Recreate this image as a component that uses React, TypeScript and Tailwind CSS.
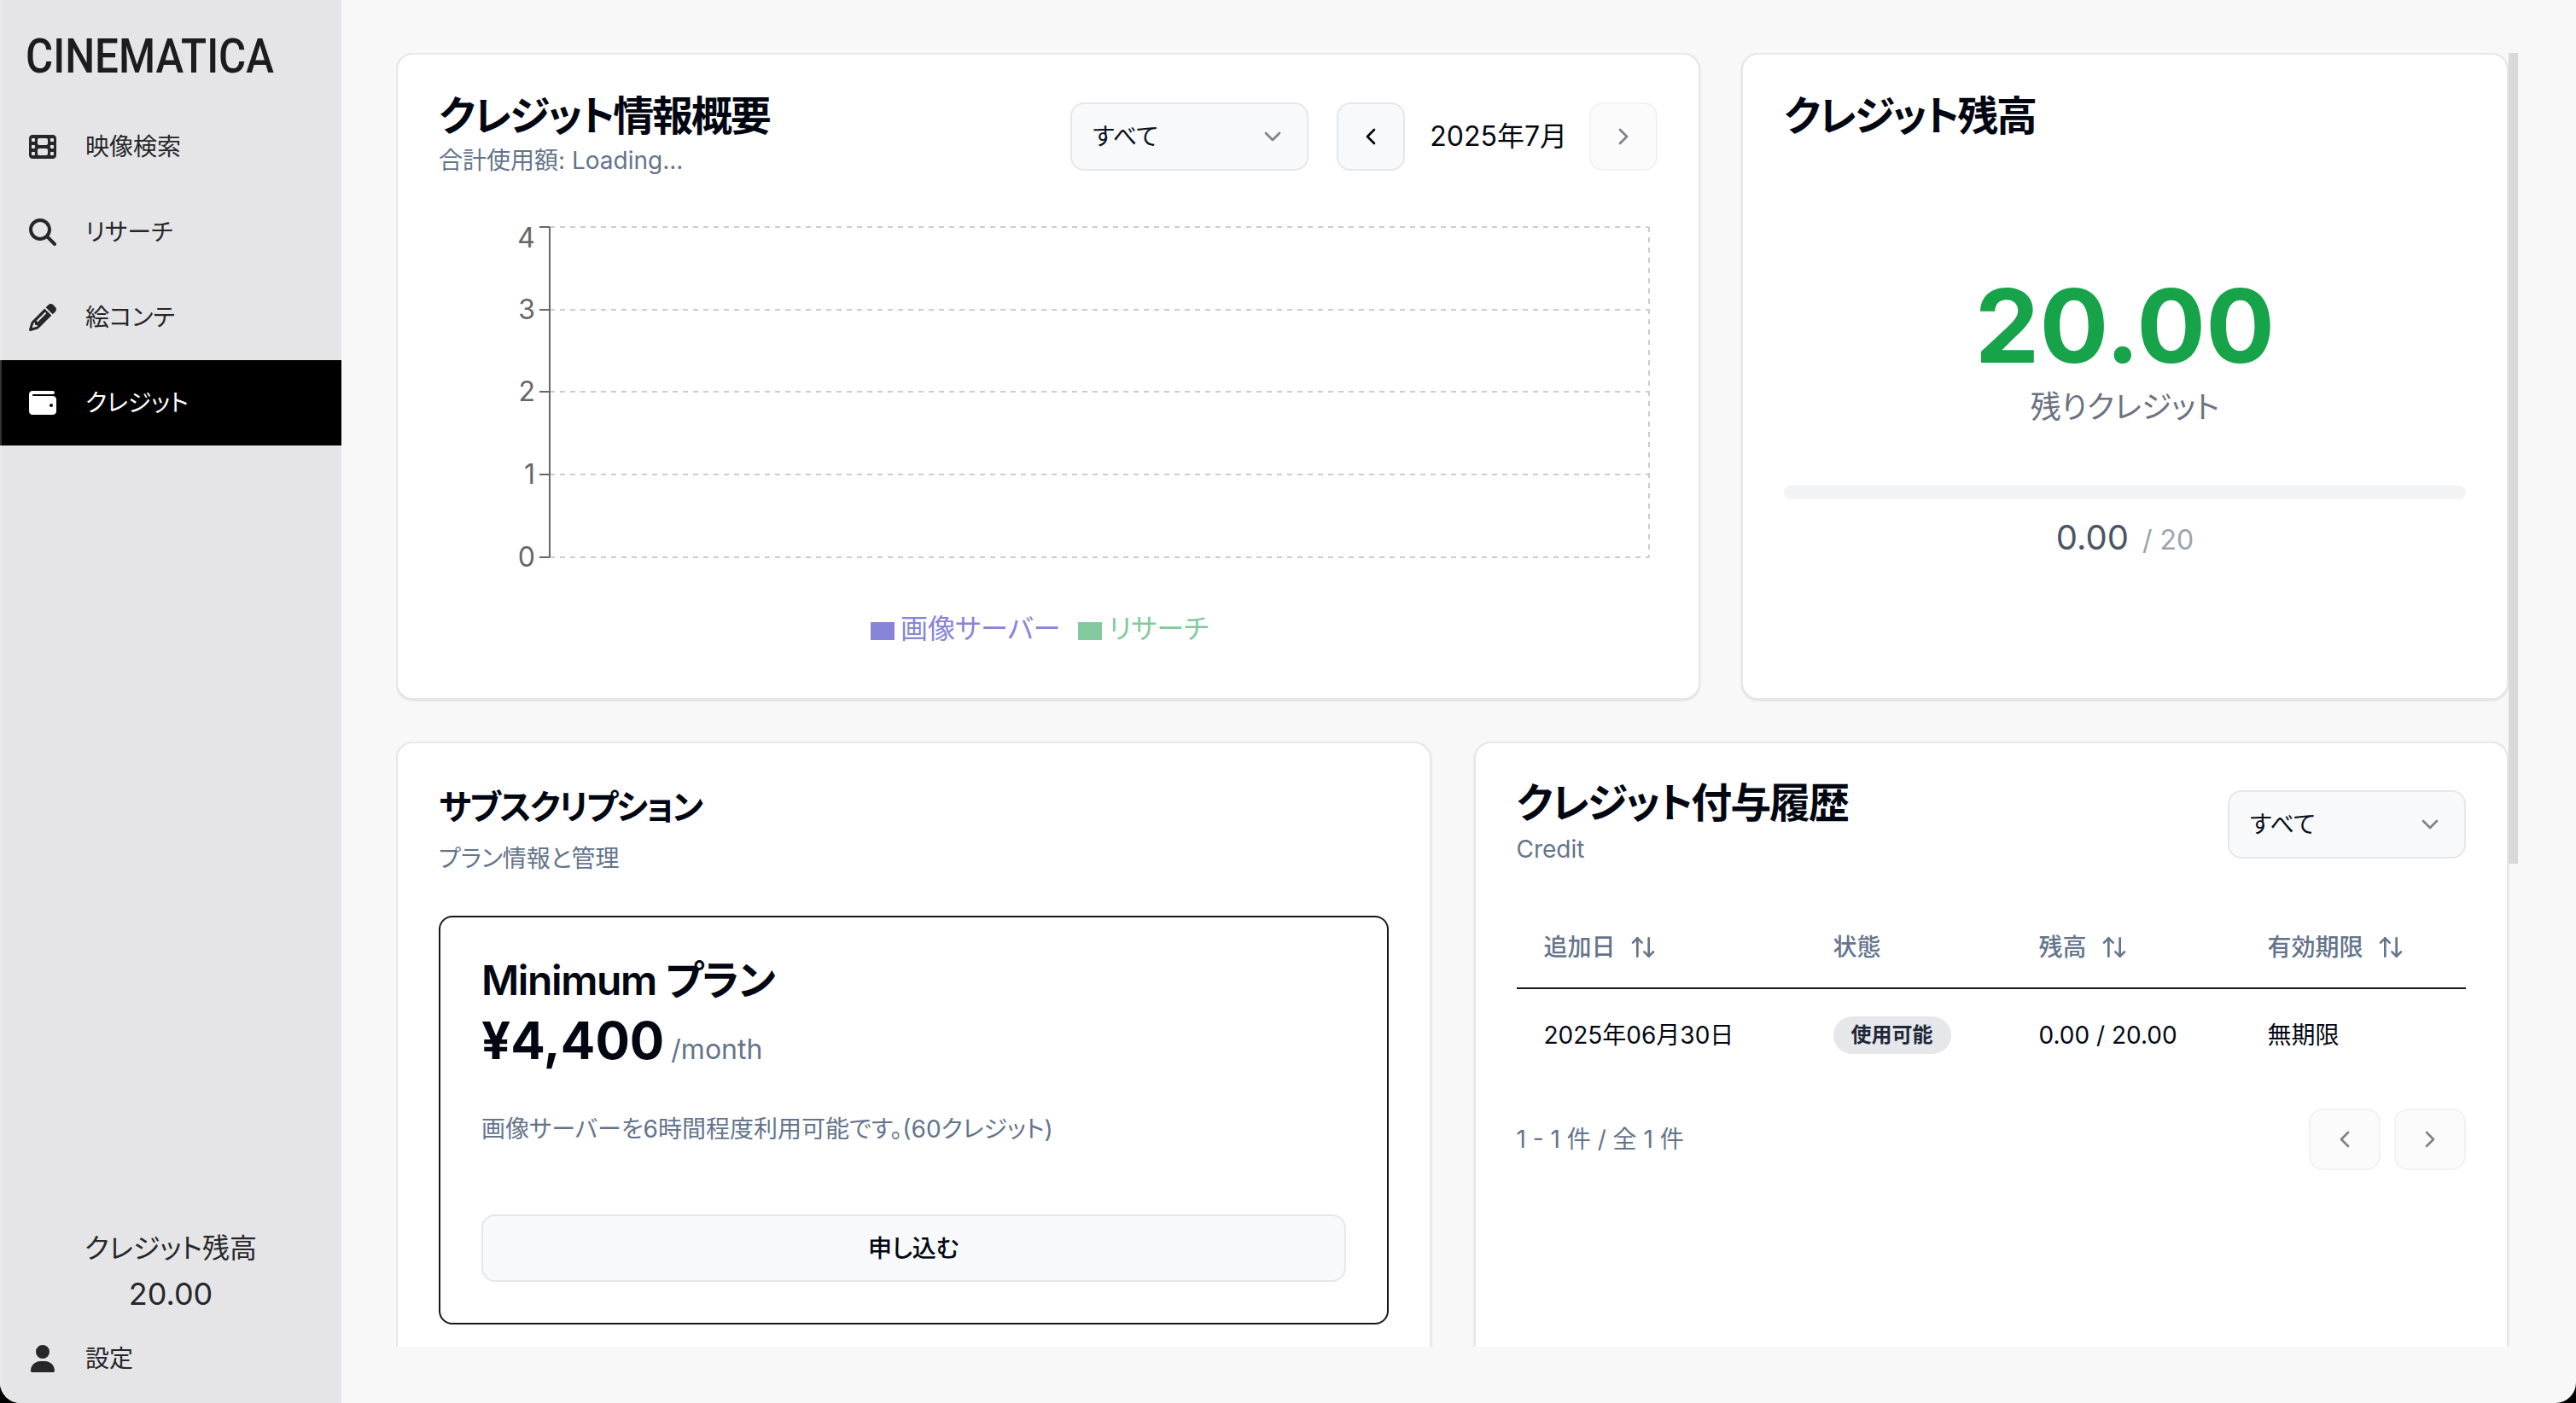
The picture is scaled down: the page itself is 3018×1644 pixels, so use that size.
import { ArrowUpDown, ChevronDown, ChevronLeft, ChevronRight } from "lucide-react";
import { FaFilm, FaMagnifyingGlass, FaPencil, FaUser, FaWallet } from "react-icons/fa6";

const navItems = [
  { label: "映像検索", icon: FaFilm },
  { label: "リサーチ", icon: FaMagnifyingGlass },
  { label: "絵コンテ", icon: FaPencil },
  { label: "クレジット", icon: FaWallet, active: true },
];

const ticks = [
  { label: "4", y: 266, textY: 279 },
  { label: "3", y: 363, textY: 363 },
  { label: "2", y: 459, textY: 459 },
  { label: "1", y: 556, textY: 556 },
  { label: "0", y: 653, textY: 653 },
];

function Select() {
  return (
    <div className="flex h-20 w-[279px] items-center justify-between rounded-2xl border-2 border-[#e5e7eb] bg-[#f8f9fa] pl-6 pr-6 text-[28px] text-[#0a0f1c]">
      <span>すべて</span>
      <ChevronDown className="h-8 w-8 opacity-50" />
    </div>
  );
}

function Sidebar() {
  return (
    <aside className="relative flex h-full w-[400px] shrink-0 flex-col bg-[#e5e5e8] text-[#27272a]">
      <div className="h-[122px] pl-[30px] pt-[32px]">
        <div className="origin-left scale-x-[0.88] text-[56px] font-medium leading-[68px] text-[#1c1c1e] [font-family:Roboto,sans-serif]">
          CINEMATICA
        </div>
      </div>
      <nav className="flex flex-col">
        {navItems.map((item) => {
          const Icon = item.icon;
          return (
            <div
              key={item.label}
              className={`flex h-[100px] items-center gap-[34px] pl-[34px] text-[28px] ${item.active ? "bg-black text-white" : ""}`}
            >
              <Icon className="h-8 w-8" />
              <span>{item.label}</span>
            </div>
          );
        })}
      </nav>
      <div className="mt-auto mb-[2px] flex flex-col items-center text-[#27272a]">
        <div className="text-[32px] leading-[48px]">クレジット残高</div>
        <div className="mt-[5px] text-[36px] leading-[48px]">20.00</div>
      </div>
      <div className="mb-[2px] flex h-[100px] items-center gap-[34px] pl-[34px] text-[28px]">
        <FaUser className="h-8 w-8" />
        <span>設定</span>
      </div>
      {/* window edge highlight */}
      <div className="absolute inset-y-0 left-0 w-[2px] bg-white/20" />
    </aside>
  );
}

function UsageChart() {
  return (
    <svg viewBox="514 240 1426 560" className="mt-[32px] block h-[560px] w-[1426px]">
      {ticks.map((t) => (
        <g key={t.label}>
          <line x1={644} x2={1932} y1={t.y} y2={t.y} stroke="#ccc" strokeWidth={2} strokeDasharray="6 6" />
          <line x1={632} x2={644} y1={t.y} y2={t.y} stroke="#666" strokeWidth={2} />
          <text x={627} y={t.textY + 11} textAnchor="end" fontSize={32} fill="#666">
            {t.label}
          </text>
        </g>
      ))}
      <line x1={1932} x2={1932} y1={266} y2={653} stroke="#ccc" strokeWidth={2} strokeDasharray="6 6" />
      <line x1={644} x2={644} y1={266} y2={653} stroke="#666" strokeWidth={2} />
      <rect x={1020} y={729} width={28} height={21} fill="#8884d8" />
      <text x={1055} y={748} fontSize={32} fill="#8884d8">画像サーバー</text>
      <rect x={1263} y={729} width={28} height={21} fill="#82ca9d" />
      <text x={1299} y={748} fontSize={32} fill="#82ca9d">リサーチ</text>
    </svg>
  );
}

function UsageCard() {
  return (
    <section className="h-[758px] rounded-[20px] border-2 border-[#e5e7eb] bg-white p-12 shadow-sm">
      <div className="flex h-[96px] items-start justify-between">
        <div>
          <h2 className="text-[48px] font-semibold leading-[48px] tracking-[-2.2px] text-[#030712]">クレジット情報概要</h2>
          <p className="mt-[8px] text-[28px] leading-[40px] text-[#64748b]">合計使用額: Loading...</p>
        </div>
        <div className="mt-[8px] flex items-center">
          <Select />
          <button className="ml-[33px] flex h-20 w-20 items-center justify-center rounded-2xl border-2 border-[#e5e7eb] bg-[#f8f9fa] text-[#030712]">
            <ChevronLeft className="h-8 w-8" />
          </button>
          <span className="ml-[29px] mr-[26px] text-[32px] text-[#030712]">2025年7月</span>
          <button className="flex h-20 w-20 items-center justify-center rounded-2xl border-2 border-[#e5e7eb] bg-[#f8f9fa] text-[#030712] opacity-50">
            <ChevronRight className="h-8 w-8" />
          </button>
        </div>
      </div>
      <UsageChart />
    </section>
  );
}

function BalanceCard() {
  return (
    <section className="h-[758px] rounded-[20px] border-2 border-[#e5e7eb] bg-white p-12 shadow-sm">
      <h2 className="text-[48px] font-semibold leading-[48px] tracking-[-2.4px] text-[#030712]">クレジット残高</h2>
      <div className="mt-[162px] flex flex-col items-center">
        <div className="text-[120px] font-bold leading-[120px] text-[#16a34a]">20.00</div>
        <div className="mt-[11px] text-[36px] leading-[48px] text-[#6b7280]">残りクレジット</div>
      </div>
      <div className="mt-[68px] h-4 rounded-full bg-[#f1f3f5]" />
      <div className="mt-[15px] flex items-baseline justify-center gap-[16px]">
        <span className="text-[40px] leading-[60px] text-[#4b5563]">0.00</span>
        <span className="text-[32px] text-[#9ca3af]">/ 20</span>
      </div>
    </section>
  );
}

function SubscriptionCard() {
  return (
    <section className="h-[900px] rounded-[20px] border-2 border-[#e5e7eb] bg-white p-12 shadow-sm">
      <h2 className="mt-[3px] text-[40px] font-semibold leading-[48px] tracking-[-2px] text-[#030712]">サブスクリプション</h2>
      <p className="mt-[16px] text-[28px] leading-[40px] text-[#64748b]">プラン情報と管理</p>
      <div className="mt-[47px] rounded-2xl border-2 border-[#18181b] px-12 pb-12 pt-[42px]">
        <h3 className="text-[48px] font-semibold leading-[64px] tracking-[-1.4px] text-[#030712]">Minimum プラン</h3>
        <div className="mt-[2px] flex items-baseline">
          <span className="text-[60px] font-bold leading-[72px] text-[#030712]">¥4,400</span>
          <span className="ml-[8px] text-[32px] text-[#64748b]">/month</span>
        </div>
        <p className="mt-[48px] text-[28px] leading-[40px] text-[#64748b]">画像サーバーを6時間程度利用可能です。(60クレジット)</p>
        <button className="mt-[80px] flex h-[79px] w-full items-center justify-center rounded-2xl border-2 border-[#e5e7eb] bg-[#f8f9fa] text-[28px] font-medium text-[#030712]">
          申し込む
        </button>
      </div>
    </section>
  );
}

function SortHeader({ label, className }: { label: string; className: string }) {
  return (
    <th className={`px-[32px] text-left font-medium ${className}`}>
      <span className="flex items-center gap-[16px]">
        {label}
        <ArrowUpDown className="h-8 w-8" />
      </span>
    </th>
  );
}

function HistoryCard() {
  return (
    <section className="h-[900px] rounded-[20px] border-2 border-[#e5e7eb] bg-white p-12 shadow-sm">
      <div className="flex items-start justify-between">
        <div className="-mt-[2px]">
          <h2 className="text-[48px] font-semibold leading-[48px] tracking-[-2.1px] text-[#030712]">クレジット付与履歴</h2>
          <p className="mt-[10px] text-[28px] leading-[40px] text-[#64748b]">Credit</p>
        </div>
        <div className="mt-[7px]">
          <Select />
        </div>
      </div>
      <table className="mt-[47px] w-full border-collapse text-[28px]">
        <thead>
          <tr className="h-[96px] border-b-2 border-[#18181b] text-[#64748b]">
            <SortHeader label="追加日" className="w-[339px]" />
            <th className="w-[241px] px-[32px] text-left font-medium">状態</th>
            <SortHeader label="残高" className="w-[268px]" />
            <SortHeader label="有効期限" className="" />
          </tr>
        </thead>
        <tbody>
          <tr className="h-[108px] text-[#030712]">
            <td className="px-[32px]">2025年06月30日</td>
            <td className="px-[32px]">
              <span className="inline-flex h-[44px] items-center rounded-full bg-[#e5e7eb] px-[21px] text-[24px] font-semibold text-[#1f2937]">使用可能</span>
            </td>
            <td className="px-[32px]">0.00 / 20.00</td>
            <td className="px-[32px]">無期限</td>
          </tr>
        </tbody>
      </table>
      <div className="mt-[33px] flex items-center justify-between">
        <span className="text-[28px] text-[#64748b]">1 - 1 件 / 全 1 件</span>
        <div className="flex gap-[16px]">
          <button className="flex h-[72px] w-[84px] items-center justify-center rounded-2xl border-2 border-[#e5e7eb] bg-[#f8f9fa] text-[#030712] opacity-50">
            <ChevronLeft className="h-8 w-8" />
          </button>
          <button className="flex h-[72px] w-[84px] items-center justify-center rounded-2xl border-2 border-[#e5e7eb] bg-[#f8f9fa] text-[#030712] opacity-50">
            <ChevronRight className="h-8 w-8" />
          </button>
        </div>
      </div>
    </section>
  );
}

export default function App() {
  return (
    <div className="h-[1644px] w-[3018px] overflow-hidden bg-black [font-family:Inter,'Noto_Sans_CJK_JP',sans-serif] [font-feature-settings:'palt']">
      <div className="flex h-full overflow-hidden rounded-b-[24px] bg-[#f8f8f9]">
        <Sidebar />
        <main className="flex-1 pl-[64px] pt-[62px]">
          {/* scroll area is clipped above the window bottom */}
          <div className="relative h-[1516px] w-[2486px] overflow-hidden">
            <div className="flex w-[2475px] flex-col gap-[49px]">
              <div className="grid grid-cols-[1528px_1fr] gap-[48px]">
                <UsageCard />
                <BalanceCard />
              </div>
              <div className="grid grid-cols-2 gap-[50px]">
                <SubscriptionCard />
                <HistoryCard />
              </div>
            </div>
            <div className="absolute right-0 top-0 h-[950px] w-[11px] bg-[#d9d9d9]" />
          </div>
        </main>
      </div>
    </div>
  );
}
